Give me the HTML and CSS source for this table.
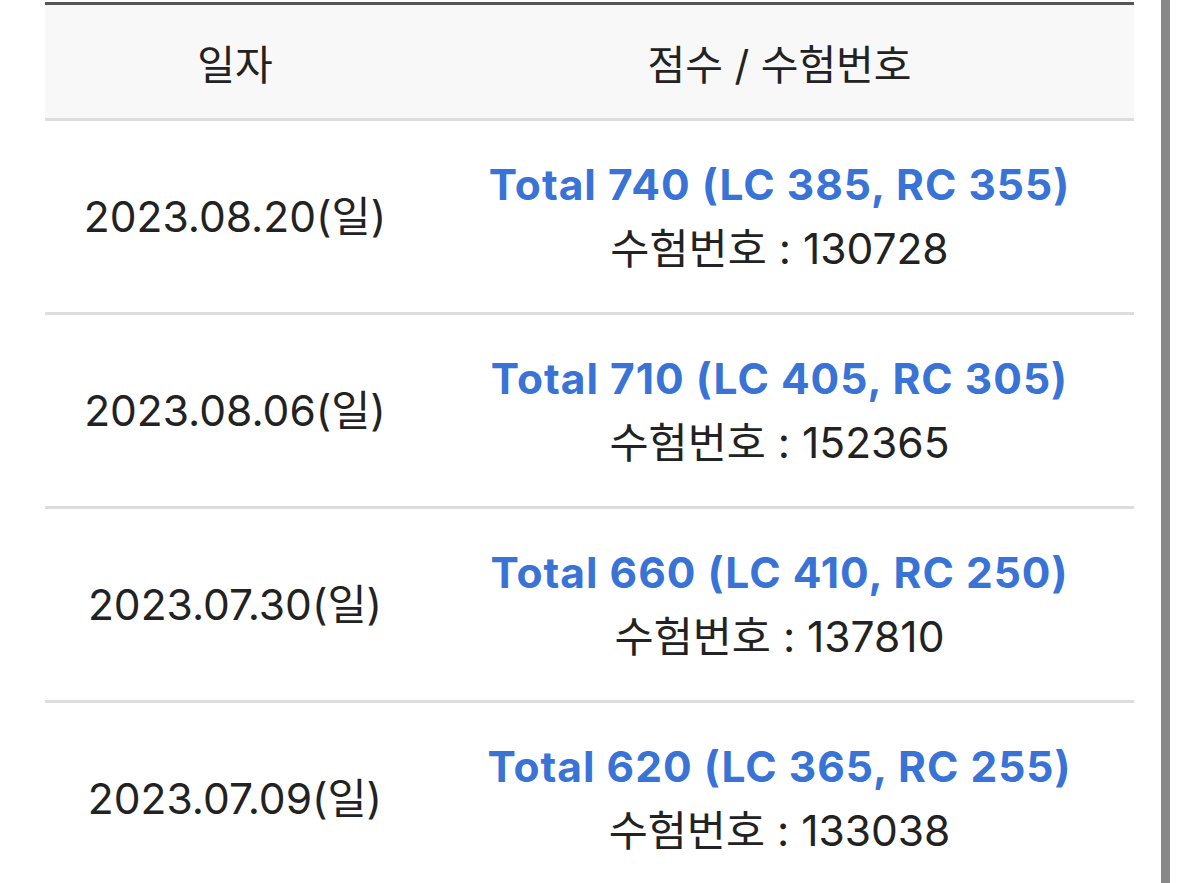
FILE: index.html
```html
<!DOCTYPE html>
<html lang="ko">
<head>
<meta charset="utf-8">
<link rel="stylesheet" href="styles.css">
</head>
<body>
<div class="page">
  <table class="scores">
    <thead>
      <tr><th class="col-date">일자</th><th class="col-score">점수 / 수험번호</th></tr>
    </thead>
    <tbody>
      <tr>
        <td class="date">2023.08.20(일)</td>
        <td class="score"><div class="total">Total 740 (LC 385, RC 355)</div><div class="num">수험번호 : 130728</div></td>
      </tr>
      <tr>
        <td class="date">2023.08.06(일)</td>
        <td class="score"><div class="total">Total 710 (LC 405, RC 305)</div><div class="num">수험번호 : 152365</div></td>
      </tr>
      <tr>
        <td class="date">2023.07.30(일)</td>
        <td class="score"><div class="total">Total 660 (LC 410, RC 250)</div><div class="num">수험번호 : 137810</div></td>
      </tr>
      <tr>
        <td class="date">2023.07.09(일)</td>
        <td class="score"><div class="total">Total 620 (LC 365, RC 255)</div><div class="num">수험번호 : 133038</div></td>
      </tr>
    </tbody>
  </table>
  <div class="scrollbar"></div>
</div>
</body>
</html>
```

FILE: styles.css
```css
html, body {
  margin: 0;
  padding: 0;
  background: #ffffff;
  overflow: hidden;
}
body {
  font-family: Inter, "Noto Sans CJK KR", sans-serif;
  color: #222222;
}
.page {
  display: flex;
  align-items: flex-start;
  height: 883px;
  padding-left: 45px;
  box-sizing: border-box;
}
.scores {
  width: 1089px;
  flex: none;
  margin-top: 2px;
  border-collapse: collapse;
  table-layout: fixed;
}
.col-date { width: 380px; }
.scores th {
  height: 113px;
  padding: 0;
  background: #f8f8f8;
  border-top: 3px solid #555555;
  border-bottom: 3px solid #dddddd;
  font-weight: 400;
  font-size: 41px;
  text-align: center;
  vertical-align: middle;
}
.scores td {
  height: 191px;
  padding: 0;
  border-bottom: 3px solid #dddddd;
  text-align: center;
  vertical-align: middle;
  font-size: 42.5px;
  line-height: 64px;
}
.total {
  color: #3873d5;
  font-weight: 700;
  letter-spacing: 1px;
}
.scrollbar {
  flex: none;
  width: 9px;
  height: 883px;
  margin-left: 27px;
  background: #888888;
}
```
